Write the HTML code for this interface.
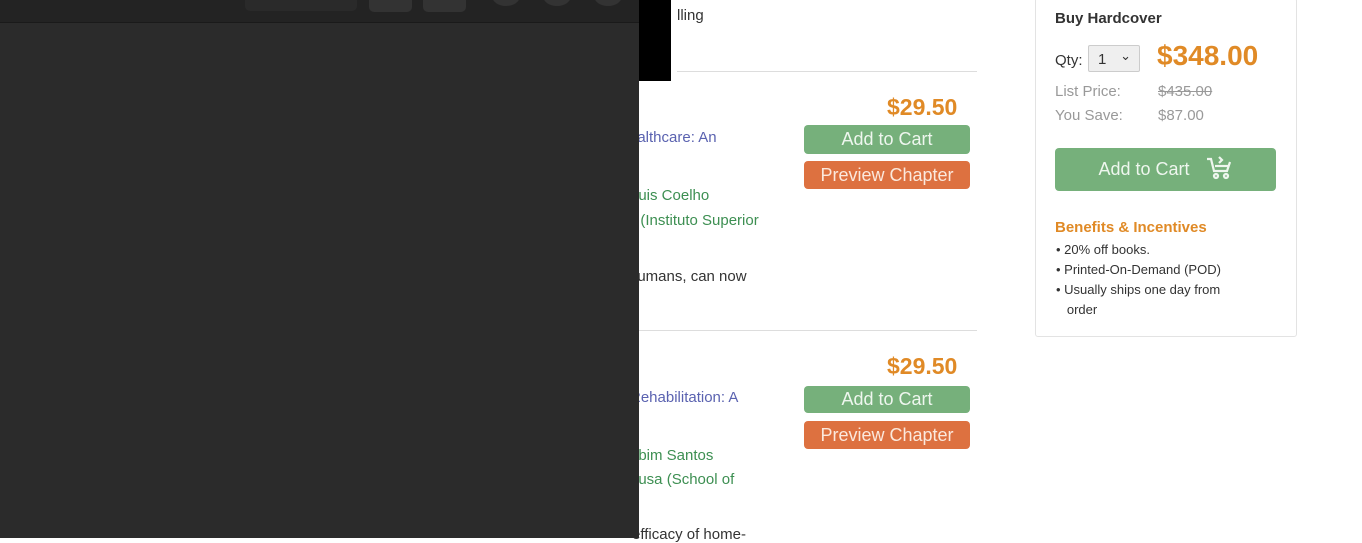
<!DOCTYPE html>
<html><head><style>
body{margin:0;width:1362px;height:538px;position:relative;overflow:hidden;background:#fff;font-family:"Liberation Sans",sans-serif;}
.a{position:absolute;white-space:nowrap;}
.btn{position:absolute;border-radius:4px;color:#eef6ee;font-size:18px;text-align:center;}
.g{background:#76b07b;}
.o{background:#dd7140;color:#fbe9dd;}
.price{color:#e08a26;font-weight:bold;font-size:23px;}
.blue{color:#5a62b0;font-size:15px;}
.green{color:#3d8f52;font-size:15px;}
.dark{color:#333;font-size:15px;}
</style></head><body>
<div class="a dark" style="left:677px;top:7px">lling</div>
<div class="a" style="left:677px;top:71px;width:300px;height:1px;background:#ddd"></div>
<div class="a" style="left:639px;top:330px;width:338px;height:1px;background:#ddd"></div>

<div class="a price" style="left:887px;top:94px">$29.50</div>
<div class="a blue" style="left:629px;top:129px">ealthcare: An</div>
<div class="a green" style="left:630px;top:187px">Luis Coelho</div>
<div class="a green" style="left:632px;top:212px">, (Instituto Superior</div>
<div class="a dark" style="left:629px;top:268px">humans, can now</div>
<div class="btn g" style="left:804px;top:125px;width:166px;height:29px;line-height:29px">Add to Cart</div>
<div class="btn o" style="left:804px;top:161px;width:166px;height:28px;line-height:28px">Preview Chapter</div>

<div class="a price" style="left:887px;top:353px">$29.50</div>
<div class="a blue" style="left:630px;top:389px">Rehabilitation: A</div>
<div class="a green" style="left:630px;top:447px">abim Santos</div>
<div class="a green" style="left:630px;top:471px">ousa (School of</div>
<div class="a dark" style="left:632px;top:526px">efficacy of home-</div>
<div class="btn g" style="left:804px;top:386px;width:166px;height:27px;line-height:27px">Add to Cart</div>
<div class="btn o" style="left:804px;top:421px;width:166px;height:28px;line-height:28px">Preview Chapter</div>

<div class="a" style="left:0;top:0;width:639px;height:538px;background:#2b2b2b"></div>
<div class="a" style="left:0;top:0;width:639px;height:22px;background:#232323;border-bottom:1px solid #1a1a1a"></div>
<div class="a" style="left:245px;top:0;width:112px;height:11px;background:#2a2a2a;border-radius:0 0 5px 5px"></div>
<div class="a" style="left:369px;top:0;width:43px;height:12px;background:#333;border-radius:0 0 5px 5px"></div>
<div class="a" style="left:423px;top:0;width:43px;height:12px;background:#333;border-radius:0 0 5px 5px"></div>
<div class="a" style="left:492px;top:-14px;width:28px;height:20px;background:#333;border-radius:50%"></div>
<div class="a" style="left:543px;top:-14px;width:28px;height:20px;background:#333;border-radius:50%"></div>
<div class="a" style="left:594px;top:-14px;width:28px;height:20px;background:#333;border-radius:50%"></div>
<div class="a" style="left:639px;top:0;width:32px;height:81px;background:#000"></div>

<div class="a" style="left:1035px;top:-2px;width:260px;height:337px;border:1px solid #e3e3e3;border-radius:3px"></div>
<div class="a" style="left:1055px;top:10px;font-size:15px;font-weight:bold;color:#333">Buy Hardcover</div>
<div class="a" style="left:1055px;top:52px;font-size:15px;color:#333">Qty:</div>
<div class="a" style="left:1088px;top:45px;width:52px;height:27px;background:#efefef;border:1px solid #ccc;border-radius:2px;box-sizing:border-box;font-size:15px;color:#333;padding:5px 0 0 9px">1<span style="position:absolute;right:8px;top:2px;font-size:13px">&#8964;</span></div>
<div class="a" style="left:1157px;top:40px;font-size:28px;font-weight:bold;color:#e08a26">$348.00</div>
<div class="a" style="left:1055px;top:83px;font-size:15px;color:#999">List Price:</div>
<div class="a" style="left:1158px;top:83px;font-size:15px;color:#999;text-decoration:line-through">$435.00</div>
<div class="a" style="left:1055px;top:107px;font-size:15px;color:#999">You Save:</div>
<div class="a" style="left:1158px;top:107px;font-size:15px;color:#999">$87.00</div>
<div class="btn g" style="left:1055px;top:148px;width:221px;height:43px;line-height:43px">Add to Cart &nbsp;
<svg width="28" height="26" viewBox="0 0 28 26" style="vertical-align:-6px" fill="none" stroke="#eef6ee" stroke-width="2.2"><path d="M2 4h4l3 12h13l3-9"/><path d="M10 11h13"/><path d="M14 2l3 3-3 3"/><circle cx="11" cy="21" r="2"/><circle cx="21" cy="21" r="2"/></svg></div>
<div class="a" style="left:1055px;top:219px;font-size:15px;font-weight:bold;color:#e08a26">Benefits &amp; Incentives</div>
<div class="a" style="left:1056px;top:240px;font-size:13px;color:#333;line-height:20px">
• 20% off books.<br>• Printed-On-Demand (POD)<br>• Usually ships one day from<br>&nbsp;&nbsp;&nbsp;order</div>
</body></html>
